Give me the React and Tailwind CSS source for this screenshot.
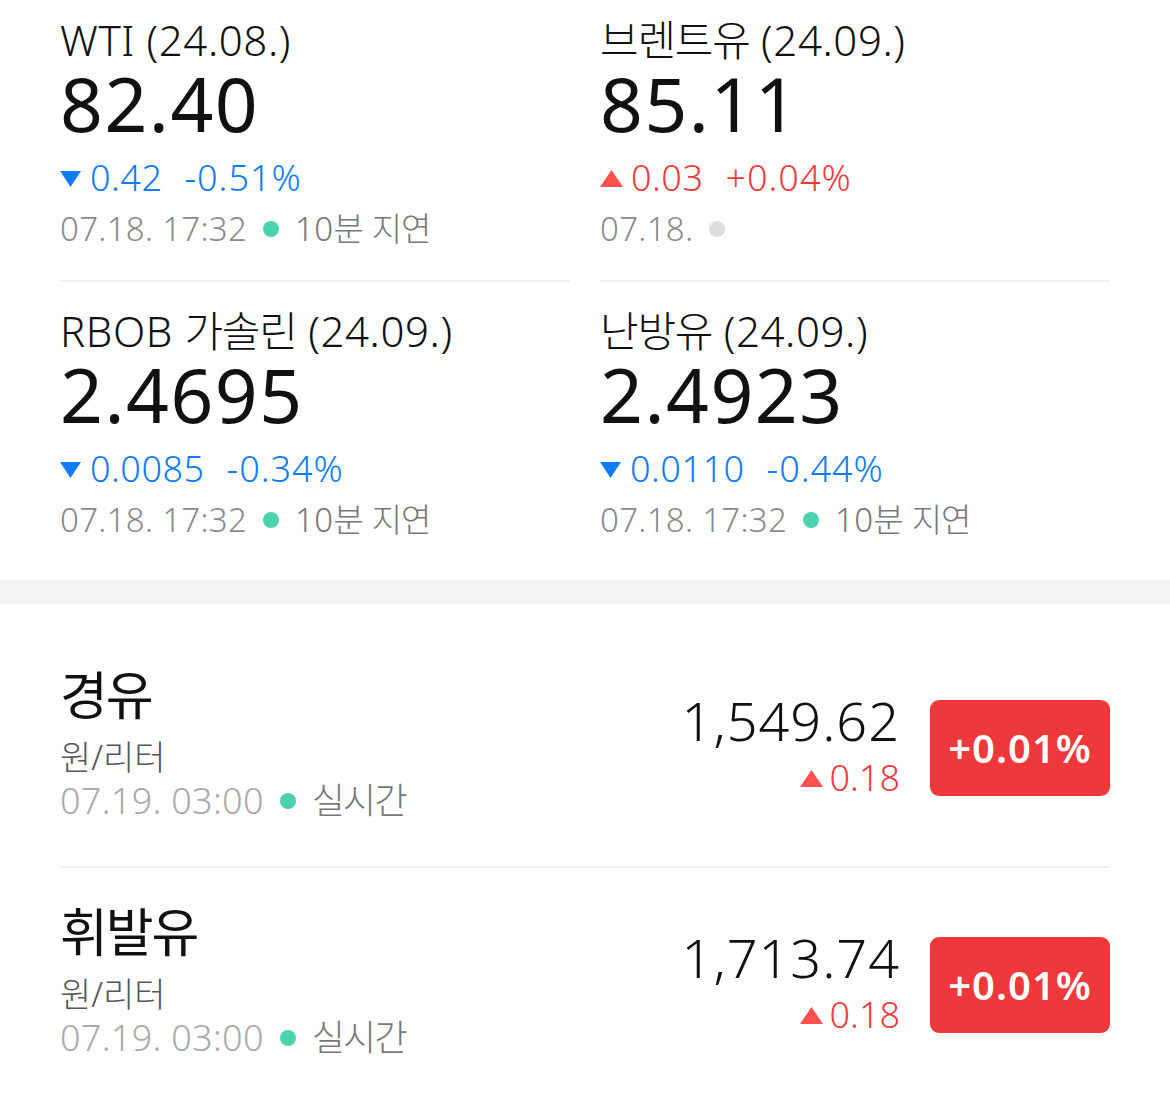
import React from "react";

const FONT = { fontFamily: '"Noto Sans", "Noto Sans CJK KR", sans-serif' };

function K({ children, t = "tracking-[-0.03em]" }) {
  return <span className={t}>{children}</span>;
}

function Down({ className = "" }) {
  return (
    <svg width="21" height="16" viewBox="0 0 21 16" className={className}>
      <polygon points="0,0 21,0 10.5,16" fill="#0f7cf6" />
    </svg>
  );
}

function Up({ className = "" }) {
  return (
    <svg width="23" height="17" viewBox="0 0 23 17" className={className}>
      <polygon points="11.5,0 23,17 0,17" fill="#ff4f4f" />
    </svg>
  );
}

function Dot({ color }) {
  return <span className={`inline-block w-[16px] h-[16px] rounded-full mx-[16px] ${color}`} />;
}

function Card({ title, price, dir, chg, pct, time, status, top }) {
  const isUp = dir === "up";
  const color = isUp ? "text-[#f03a3d]" : "text-[#0f7cf6]";
  return (
    <div className={top}>
      <div className="text-[42px] leading-[50px] text-[#111111] whitespace-nowrap font-light tracking-[0.6px]">{title}</div>
      <div className="text-[75px] leading-[76px] text-[#111111] tracking-[1.5px]">{price}</div>
      <div className={`mt-[15px] flex items-center text-[36px] leading-[44px] font-light ${color}`}>
        {isUp ? <Up className="mr-[8px] mt-[1px]" /> : <Down className="mr-[9px] mt-[1px]" />}
        <span className="tracking-[0.5px]">{chg}</span>
        <span className="ml-[22px] tracking-[1px]">{pct}</span>
      </div>
      <div className="mt-[7px] flex items-center text-[33px] leading-[44px] font-light text-[#8a8a8a] tracking-[0.3px]">
        <span>{time}</span>
        {status ? (
          <>
            <Dot color="bg-[#4dd2b0]" />
            <span className="text-[#777777]">{status}</span>
          </>
        ) : (
          <Dot color="bg-[#dddddd]" />
        )}
      </div>
    </div>
  );
}

function FuelRow({ name, price, chg, pct, top }) {
  return (
    <div className={`flex items-center justify-between ${top}`}>
      <div>
        <div className="text-[52px] leading-[56px] text-[#111111]"><K t="tracking-[-0.04em]">{name}</K></div>
        <div className="mt-[12px] text-[34px] leading-[44px] font-light text-[#555555]"><K t="">원</K>/<K t="">리터</K></div>
        <div className="flex items-center text-[36px] leading-[44px] font-light text-[#aaaaaa] tracking-[0.3px]">
          <span>07.19. 03:00</span>
          <span className="inline-block w-[16px] h-[16px] rounded-full bg-[#4dd2b0] mx-[16px]" />
          <span className="text-[#777777]"><K t="tracking-[-0.05em]">실시간</K></span>
        </div>
      </div>
      <div className="flex items-center gap-[30px]">
        <div className="flex flex-col items-end">
          <div className="text-[54px] leading-[60px] text-[#111111] font-light tracking-[1px]">{price}</div>
          <div className="mt-[5px] flex items-center text-[36px] leading-[46px] font-light text-[#f03a3d]">
            <Up className="mr-[7px] mt-[1px]" />
            <span>{chg}</span>
          </div>
        </div>
        <div className="mt-[6px] w-[180px] h-[96px] rounded-[9px] bg-[#ee383c] flex items-center justify-center text-white text-[40px] font-semibold tracking-[1px]">
          {pct}
        </div>
      </div>
    </div>
  );
}

export default function App() {
  return (
    <div className="w-[1170px] h-[1095px] bg-white overflow-hidden" style={FONT}>
      <div className="grid grid-cols-2 gap-x-[30px] px-[60px]">
        <div>
          <Card
            top="pt-[15px] pb-[29px]"
            title={<>WTI (24.08.)</>}
            price="82.40"
            dir="down"
            chg="0.42"
            pct="-0.51%"
            time="07.18. 17:32"
            status={<>10<K>분</K> <K>지연</K></>}
          />
          <div className="h-[2px] bg-[#eeeeee]" />
          <Card
            top="pt-[24px] pb-[38px]"
            title={<>RBOB <K>가솔린</K> (24.09.)</>}
            price="2.4695"
            dir="down"
            chg="0.0085"
            pct="-0.34%"
            time="07.18. 17:32"
            status={<>10<K>분</K> <K>지연</K></>}
          />
        </div>
        <div>
          <Card
            top="pt-[15px] pb-[29px]"
            title={<><K>브렌트유</K> (24.09.)</>}
            price="85.11"
            dir="up"
            chg="0.03"
            pct="+0.04%"
            time="07.18."
            status={null}
          />
          <div className="h-[2px] bg-[#eeeeee]" />
          <Card
            top="pt-[24px] pb-[38px]"
            title={<><K>난방유</K> (24.09.)</>}
            price="2.4923"
            dir="down"
            chg="0.0110"
            pct="-0.44%"
            time="07.18. 17:32"
            status={<>10<K>분</K> <K>지연</K></>}
          />
        </div>
      </div>
      <div className="h-[24px] bg-[#f3f4f6]" />
      <div className="px-[60px] pt-[27px]">
        <FuelRow top="pt-[36px] pb-[43px]" name="경유" price="1,549.62" chg="0.18" pct="+0.01%" />
        <div className="h-[2px] bg-[#eeeeee]" />
        <FuelRow top="pt-[36px] pb-[35px]" name="휘발유" price="1,713.74" chg="0.18" pct="+0.01%" />
      </div>
    </div>
  );
}
